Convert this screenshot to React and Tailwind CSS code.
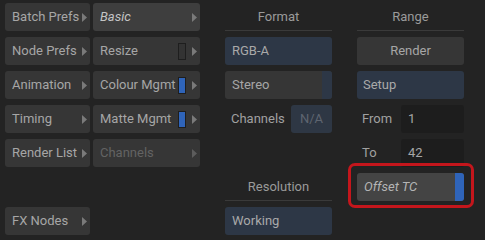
import React from "react";

// Flame-style batch prefs menu. Fixed row pitch: 28px rows, 6px gaps.
const FONT = { fontFamily: "Roboto, 'DejaVu Sans', sans-serif" };

function Arrow({ dim }) {
  return (
    <svg width="5" height="9" viewBox="0 0 5 9" className="shrink-0">
      <path d="M0 0 L5 4.5 L0 9 Z" fill={dim ? "#5c5c5c" : "#7a7a7a"} />
    </svg>
  );
}

function MenuBtn({ label, active, italic, dim, chip }) {
  return (
    <div
      className={`h-[28px] rounded-[3px] flex items-center pl-[7px] pr-[3px] ${
        active ? "bg-[#3e3e3e]" : "bg-[#363636]"
      }`}
    >
      <span
        className={`flex-1 text-[13px] whitespace-nowrap overflow-hidden ${italic ? "italic" : ""} ${
          dim ? "text-[#636363]" : active ? "text-[#c4c4c4]" : "text-[#a6a6a6]"
        }`}
      >
        {label}
      </span>
      {chip === "off" && (
        <span className="shrink-0 w-[8px] h-[17px] mr-[6px] border border-[#1e1e1e] bg-[#333333]" />
      )}
      {chip === "on" && (
        <span className="shrink-0 w-[8px] h-[17px] mr-[6px] bg-[#2f64b9] border border-[#1e1e1e]" />
      )}
      <Arrow dim={dim} />
    </div>
  );
}

function Header({ children }) {
  return (
    <div className="h-[28px] flex items-center justify-center border-b border-[#3a3a3a] text-[13px] text-[#9a9a9a]">
      {children}
    </div>
  );
}

function Spacer() {
  return <div className="h-[28px]" />;
}

export default function App() {
  return (
    <div
      className="w-[485px] h-[240px] bg-[#232323] flex pt-[3px] pl-[5px] overflow-hidden"
      style={FONT}
    >
      <div className="w-[85px] flex flex-col gap-[6px]">
        <MenuBtn label="Batch Prefs" />
        <MenuBtn label="Node Prefs" />
        <MenuBtn label="Animation" />
        <MenuBtn label="Timing" />
        <MenuBtn label="Render List" />
        <Spacer />
        <MenuBtn label="FX Nodes" />
      </div>

      <div className="w-[107px] ml-[3px] flex flex-col gap-[6px]">
        <MenuBtn label="Basic" active italic />
        <MenuBtn label="Resize" chip="off" />
        <MenuBtn label="Colour Mgmt" chip="on" />
        <MenuBtn label="Matte Mgmt" chip="on" />
        <MenuBtn label="Channels" dim />
      </div>

      <div className="w-[107px] ml-[25px] flex flex-col gap-[6px] text-[13px]">
        <Header>Format</Header>
        <div className="h-[28px] rounded-[3px] bg-[#2d3746] flex items-center pl-[7px] text-[#a9a9a9]">
          RGB-A
        </div>
        <div className="h-[28px] rounded-[3px] bg-[#363636] flex overflow-hidden">
          <div className="flex-1 flex items-center pl-[7px] text-[#a6a6a6]">Stereo</div>
          <div className="w-[10px] bg-[#2d3746]" />
        </div>
        <div className="h-[28px] flex items-center">
          <span className="flex-1 pl-[6px] text-[#a0a0a0]">Channels</span>
          <div className="w-[41px] h-[28px] rounded-[3px] bg-[#2e3744] flex items-center justify-center text-[#5e6570]">
            N/A
          </div>
        </div>
        <Spacer />
        <Header>Resolution</Header>
        <div className="h-[28px] rounded-[3px] bg-[#2d3746] flex items-center pl-[7px] text-[#a9a9a9]">
          Working
        </div>
      </div>

      <div className="w-[107px] ml-[25px] flex flex-col gap-[6px] text-[13px]">
        <Header>Range</Header>
        <div className="h-[28px] rounded-[3px] bg-[#363636] flex items-center justify-center text-[#a6a6a6]">
          Render
        </div>
        <div className="h-[28px] rounded-[3px] bg-[#2d3746] flex items-center pl-[6px] text-[#a9a9a9]">
          Setup
        </div>
        <div className="h-[28px] flex items-center">
          <span className="w-[44px] pl-[5px] text-[#a0a0a0]">From</span>
          <div className="flex-1 h-[28px] rounded-[3px] bg-[#1d1d1d] flex items-center pl-[7px] text-[#a6a6a6]">
            1
          </div>
        </div>
        <div className="h-[28px] flex items-center">
          <span className="w-[44px] pl-[5px] text-[#a0a0a0]">To</span>
          <div className="flex-1 h-[28px] rounded-[3px] bg-[#1d1d1d] flex items-center pl-[7px] text-[#a6a6a6]">
            42
          </div>
        </div>
        <div className="relative h-[28px] rounded-[3px] bg-[#444444] flex overflow-visible">
          <div className="flex-1 flex items-center pl-[7px] italic text-[#b4b4b4]">Offset TC</div>
          <div className="w-[9px] rounded-r-[3px] bg-[#2f64b9]" />
          <div className="absolute left-[-9px] right-[-10px] top-[-10px] bottom-[-7px] border-[3px] border-[#c4161c] rounded-[7px] pointer-events-none" />
        </div>
      </div>
    </div>
  );
}
